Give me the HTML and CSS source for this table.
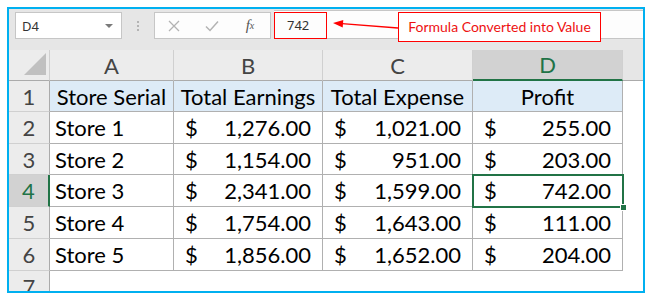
FILE: index.html
```html
<!DOCTYPE html>
<html>
<head>
<title>Formula Converted into Value</title>
<link rel="stylesheet" href="styles.css">
</head>
<body>
<div class="frame">

<div class="toolbar">
  <div class="namebox"><span>D4</span><span class="caret"></span></div>
  <div class="grip"><i></i><i></i><i></i></div>
  <div class="fxbtns">
    <span class="btn"><svg width="12" height="12" viewBox="0 0 12 12"><path d="M1 1L11 11M11 1L1 11" stroke="#b3b3b3" stroke-width="1.3" fill="none"/></svg></span>
    <span class="btn"><svg width="14" height="12" viewBox="0 0 14 12"><path d="M1 6.5L5 10.5L13 1.5" stroke="#b3b3b3" stroke-width="1.5" fill="none"/></svg></span>
    <span class="btn fx">f<sub>x</sub></span>
  </div>
  <div class="formula">
    <span class="value">742</span>
    <div class="mark"></div>
    <svg class="arrow" width="75" height="20" viewBox="0 0 75 20">
      <path d="M13 8.7L69 13" stroke="#ff0000" stroke-width="1.3" fill="none"/>
      <path d="M4 8L14.3 5.1L13.7 12.4Z" fill="#ff0000"/>
    </svg>
    <div class="callout">Formula Converted into Value</div>
  </div>
</div>

<div class="sheet">
  <div class="hd corner"><span class="tri"></span></div>
  <div class="hd">A</div>
  <div class="hd">B</div>
  <div class="hd">C</div>
  <div class="hd on">D</div>
  <div class="hd fill"></div>

  <div class="rh">1</div>
  <div class="c t">Store Serial</div>
  <div class="c t">Total Earnings</div>
  <div class="c t">Total Expense</div>
  <div class="c t">Profit</div>
  <div class="e"></div>

  <div class="rh">2</div>
  <div class="c">Store 1</div>
  <div class="c m"><span>$</span><span>1,276.00</span></div>
  <div class="c m"><span>$</span><span>1,021.00</span></div>
  <div class="c m"><span>$</span><span>255.00</span></div>
  <div class="e"></div>

  <div class="rh">3</div>
  <div class="c">Store 2</div>
  <div class="c m"><span>$</span><span>1,154.00</span></div>
  <div class="c m"><span>$</span><span>951.00</span></div>
  <div class="c m"><span>$</span><span>203.00</span></div>
  <div class="e"></div>

  <div class="rh on">4</div>
  <div class="c">Store 3</div>
  <div class="c m"><span>$</span><span>2,341.00</span></div>
  <div class="c m"><span>$</span><span>1,599.00</span></div>
  <div class="c m sel"><span>$</span><span>742.00</span></div>
  <div class="e"></div>

  <div class="rh">5</div>
  <div class="c">Store 4</div>
  <div class="c m"><span>$</span><span>1,754.00</span></div>
  <div class="c m"><span>$</span><span>1,643.00</span></div>
  <div class="c m"><span>$</span><span>111.00</span></div>
  <div class="e"></div>

  <div class="rh">6</div>
  <div class="c">Store 5</div>
  <div class="c m"><span>$</span><span>1,856.00</span></div>
  <div class="c m"><span>$</span><span>1,652.00</span></div>
  <div class="c m"><span>$</span><span>204.00</span></div>
  <div class="e"></div>

  <div class="rh">7</div>
  <div class="e"></div>
  <div class="e"></div>
  <div class="e"></div>
  <div class="e"></div>
  <div class="e"></div>
</div>

</div>
</body>
</html>
```

FILE: styles.css
```css
/* Excel window: formula bar and sheet */

body
{ margin: 0;
background: #fff;
font-family: Lato, "Liberation Sans", sans-serif;
}

div.frame
{ margin: 7px;
width: 638px;
height: 286px;
box-sizing: border-box;
border: 2px solid #00b0f0;
background: #e6e6e6;
display: flex;
flex-direction: column;
overflow: hidden;
}

/* Formula bar */

div.toolbar
{ flex: none;
height: 41px;
box-sizing: border-box;
padding: 3px 0 0 6px;
display: flex;
align-items: flex-start;
font-family: "Noto Sans", "Open Sans", sans-serif;
font-size: 13px;
color: #333;
}

div.namebox
{ width: 107px;
height: 27px;
box-sizing: border-box;
border: 1px solid #c6c6c6;
background: #fff;
display: flex;
align-items: center;
justify-content: space-between;
padding: 0 8px 0 6px;
}

span.caret
{ border-left: 4px solid transparent;
border-right: 4px solid transparent;
border-top: 4px solid #7a7a7a;
}

div.grip
{ width: 32px;
height: 27px;
display: flex;
flex-direction: column;
align-items: center;
justify-content: center;
gap: 2px;
}

div.grip i
{ width: 2px;
height: 2px;
background: #b4b4b4;
}

div.fxbtns
{ width: 117px;
height: 27px;
box-sizing: border-box;
border: 1px solid #c6c6c6;
background: #fdfdfd;
display: flex;
align-items: center;
}

span.btn
{ width: 38px;
display: flex;
justify-content: center;
align-items: center;
}

span.fx
{ font-family: "Liberation Serif", serif;
font-style: italic;
font-size: 15px;
color: #555;
}

span.fx sub
{ font-size: 10px;
vertical-align: -1px;
}

div.formula
{ flex: 1;
height: 29px;
margin: -2px 0 0 3px;
box-sizing: border-box;
border-top: 1px solid #c6c6c6;
border-bottom: 1px solid #c6c6c6;
background: #fdfdfd;
position: relative;
}

span.value
{ display: block;
padding-left: 13px;
line-height: 28px;
}

div.mark
{ position: absolute;
left: 0;
top: 1px;
width: 53px;
height: 27px;
box-sizing: border-box;
border: 1px solid #ff0000;
}

svg.arrow
{ position: absolute;
left: 55px;
top: 4px;
}

div.callout
{ position: absolute;
left: 124px;
top: 1px;
width: 203px;
height: 30px;
box-sizing: border-box;
border: 1px solid #ff0000;
background: #fff;
color: #ee1111;
font-family: Lato, "Liberation Sans", sans-serif;
font-size: 14px;
line-height: 28px;
text-align: center;
}

/* Sheet */

div.sheet
{ flex: 1;
display: grid;
grid-template-columns: 41px 124px 149px 150px 150px 1fr;
grid-template-rows: 31px 31px 32px 31px 32px 32px 32px 32px;
background: #fff;
overflow: hidden;
font-size: 22px;
}

div.hd, div.rh
{ background: #ececec;
color: #444;
display: flex;
align-items: center;
justify-content: center;
box-sizing: border-box;
}

div.hd
{ border-right: 1px solid #d0d0d0;
border-bottom: 1px solid #ababab;
}

div.hd.fill
{ border-right: none;
background: #e6e6e6;
}

div.rh
{ border-right: 1px solid #ababab;
border-bottom: 1px solid #d0d0d0;
}

div.hd.on
{ background: #d2d2d2;
color: #217346;
border-bottom: 2px solid #217346;
}

div.rh.on
{ background: #d2d2d2;
color: #217346;
border-right: 2px solid #217346;
}

div.corner
{ align-items: flex-end;
justify-content: flex-end;
padding: 0 3px 5px 0;
}

span.tri
{ border-left: 22px solid transparent;
border-bottom: 22px solid #c0c0c0;
}

div.c
{ border-right: 1px solid #b0b0b0;
border-bottom: 1px solid #b0b0b0;
box-sizing: border-box;
display: flex;
align-items: center;
padding-left: 5px;
color: #000;
}

div.c.t
{ background: #ddebf7;
justify-content: center;
padding: 0;
}

div.c.m
{ justify-content: space-between;
padding: 0 11px 0 11px;
}

div.sel
{ position: relative;
}

div.sel::before
{ content: "";
position: absolute;
left: -1px;
top: -1px;
right: -2px;
bottom: -2px;
border: 2px solid #217346;
}

div.sel::after
{ content: "";
position: absolute;
right: -5px;
bottom: -5px;
width: 5px;
height: 5px;
background: #217346;
border: 1px solid #fff;
}
```
